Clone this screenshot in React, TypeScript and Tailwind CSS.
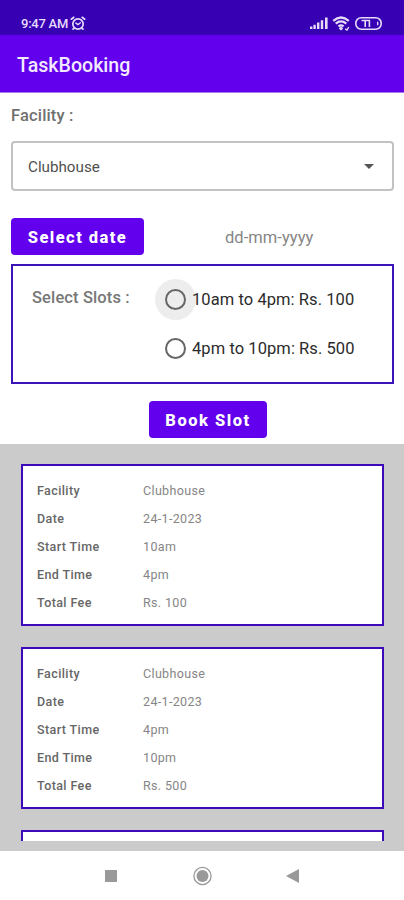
import React from "react";

type Booking = { facility: string; date: string; start: string; end: string; fee: string };

const bookings: Booking[] = [
  { facility: "Clubhouse", date: "24-1-2023", start: "10am", end: "4pm", fee: "Rs. 100" },
  { facility: "Clubhouse", date: "24-1-2023", start: "4pm", end: "10pm", fee: "Rs. 500" },
];

function StatusBar() {
  return (
    <div className="flex h-[35px] shrink-0 items-center bg-[#3700b3] pl-[21px] pr-[22px] pt-[11px] text-[#e6dcfa]">
      <span className="pt-px text-[13px] leading-4 font-medium tracking-[-0.25px] whitespace-nowrap">9:47 AM</span>
      <svg className="ml-[2px]" width="16" height="15" viewBox="0 0 16 15" fill="none" stroke="currentColor" strokeWidth="1.7" strokeLinecap="round">
        <circle cx="8" cy="8" r="5.2" />
        <path d="M1.3 3.2 3.8 1.3M14.7 3.2 12.2 1.3M4 12.2 3 13.2M12 12.2l1 1" />
        <path d="M5.9 7.1 8 8.6l2.4-1.8" strokeWidth="1.4" />
      </svg>
      <svg className="ml-auto" width="20" height="12" viewBox="0 0 20 12" fill="currentColor">
        <path d="M1 9.5h2.4V12H1zM4.4 7.7h2.4V12H4.4zM8 5.6h2.4V12H8zM11.8 3.2h2.4V12h-2.4zM16 .6h2.6V12H16z" />
      </svg>
      <svg className="ml-[3px]" width="19" height="15" viewBox="0 0 19 15" fill="none" stroke="currentColor" strokeWidth="2.2">
        <path d="M1.2 4.8Q9 -1.8 16.8 4.8M3.7 7.6q5.3-4.4 10.6 0M6.4 10.4q2.6-2 5.2 0" />
        <path d="M9 10.8 11 12.4 9 14.2 7 12.4z" fill="currentColor" strokeWidth=".6" />
        <path d="M13.2 12.8 15 14l1.8-3" strokeWidth="1.4" />
      </svg>
      <svg className="ml-1" width="27" height="13" viewBox="0 0 27 13" fill="none" stroke="currentColor">
        <rect x=".8" y=".8" width="25.4" height="11.4" rx="5.4" strokeWidth="1.6" />
        <path d="M6.5 3.5h8.5M10.2 3.5v6.5M14.4 3.5v6.5" strokeWidth="1.6" />
        <path d="M22.7 4.8v3.4" strokeWidth="1.3" />
      </svg>
    </div>
  );
}

function Slot({ label, active }: { label: string; active?: boolean }) {
  return (
    <div className="flex h-[49px] items-center">
      <span className={`flex size-[41px] items-center justify-center rounded-full ${active ? "bg-[#ededed]" : ""}`}>
        <span className="size-[21px] rounded-full border-2 border-[#666]" />
      </span>
      <span className="-ml-[4px] pt-[2px] text-[16.5px] tracking-[0.07px] whitespace-nowrap text-[#2b2b2b]">{label}</span>
    </div>
  );
}

function BookingCard({ booking }: { booking: Booking }) {
  const rows = [
    ["Facility", booking.facility],
    ["Date", booking.date],
    ["Start Time", booking.start],
    ["End Time", booking.end],
    ["Total Fee", booking.fee],
  ];
  return (
    <div className="h-[162px] shrink-0 border-2 border-[#3c0abb] bg-white pl-[14px] pt-[11px]">
      {rows.map(([name, value]) => (
        <div key={name} className="flex h-[28px] items-center text-[12.5px]">
          <span className="w-[106px] font-medium tracking-[0.4px] text-[#666]">{name}</span>
          <span className="tracking-[0.35px] text-[#858585]">{value}</span>
        </div>
      ))}
    </div>
  );
}

export default function App() {
  return (
    <div className="flex h-[900px] w-[404px] flex-col overflow-hidden bg-white font-['Roboto',sans-serif]">
      <StatusBar />
      <header className="flex h-[58px] shrink-0 items-center border-b border-[#a57bea] bg-[#6200ee] pl-[17px] pt-[4px] text-[19.6px] font-medium text-[#f3eafe]">
        TaskBooking
      </header>
      <main className="flex h-[351px] shrink-0 flex-col pr-[10px] pl-[11px]">
        <div className="mt-[11px] h-6 text-[16.5px] leading-6 font-medium tracking-[0.15px] text-[#707070]">Facility :</div>
        <div className="mt-[13px] flex h-[50px] shrink-0 items-center justify-between rounded-[4px] border-2 border-[#c2c2c2] pr-[18px] pl-[15px] text-[#505050]">
          <span className="pt-[2px] text-[15.2px]">Clubhouse</span>
          <svg width="10" height="5" viewBox="0 0 10 5" fill="#555">
            <path d="M0 0h10L5 5z" />
          </svg>
        </div>
        <div className="mt-[27px] flex h-[37px] shrink-0 items-center">
          <button className="h-[37px] w-[133px] rounded-[4px] bg-[#6200ee] pt-[3px] text-[16.5px] font-extrabold tracking-[1.45px] text-white">Select date</button>
          <span className="ml-[81px] pt-[4px] text-[16.5px] tracking-[0.05px] text-[#858585]">dd-mm-yyyy</span>
        </div>
        <section className="mt-[9px] flex h-[120px] shrink-0 border-2 border-[#3b13b9] pt-[9px]">
          <h2 className="ml-[19px] mt-[11px] w-[123px] text-[16.5px] leading-6 font-medium tracking-[0.12px] text-[#777]">Select Slots :</h2>
          <div>
            <Slot label="10am to 4pm: Rs. 100" active />
            <Slot label="4pm to 10pm: Rs. 500" />
          </div>
        </section>
        <button className="mt-[17px] ml-[138px] h-[37px] w-[118px] shrink-0 rounded-[4px] bg-[#6200ee] pt-[3px] text-[16.5px] font-extrabold tracking-[1.5px] text-white">Book Slot</button>
      </main>
      <section className="h-[407px] shrink-0 bg-[#cbcbcb] pr-[20px] pl-[21px] pt-[20px]">
        <div className="flex h-[377px] flex-col gap-[21px] overflow-hidden">
          {bookings.map((booking) => (
            <BookingCard key={booking.start} booking={booking} />
          ))}
          <div className="h-[162px] shrink-0 border-2 border-[#3c0abb] bg-white" />
        </div>
      </section>
      <nav className="flex h-[49px] shrink-0 items-center justify-between pt-px pr-[105px] pl-[105px]">
        <span className="size-3 bg-[#999]" />
        <svg width="20" height="20" viewBox="0 0 20 20">
          <circle cx="10.5" cy="10" r="8.6" fill="none" stroke="#999" strokeWidth="1.3" />
          <circle cx="10.5" cy="10" r="6" fill="#999" />
        </svg>
        <svg width="13" height="14" viewBox="0 0 13 14" fill="#999">
          <path d="M0 7 13 0v14z" />
        </svg>
      </nav>
    </div>
  );
}
